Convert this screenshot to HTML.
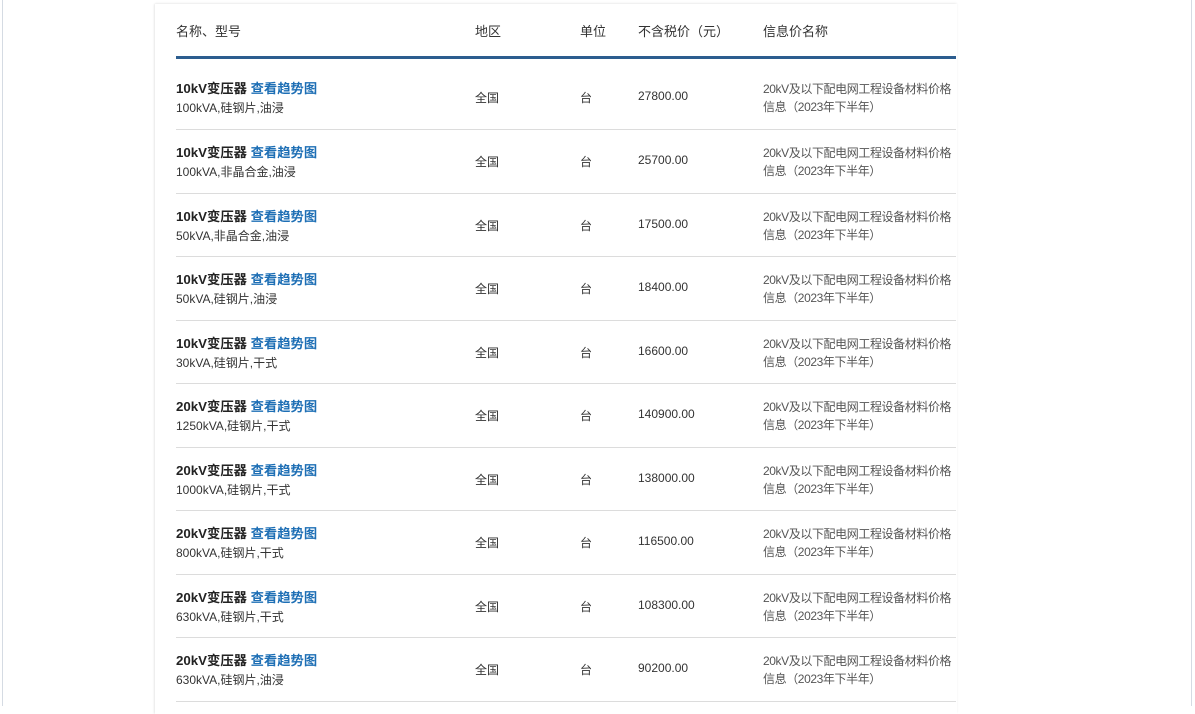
<!DOCTYPE html>
<html><head><meta charset="utf-8"><style>
*{margin:0;padding:0;box-sizing:border-box}
body{width:1195px;height:706px;overflow:hidden;background:#fff;font-family:"Liberation Sans","Noto Sans CJK SC",sans-serif;color:#333;position:relative}
.lb{position:absolute;left:2px;top:0;width:1px;height:706px;background:#d5dbe3}
.rb{position:absolute;left:1191px;top:0;width:1px;height:706px;background:#d5dbe3}
.panel{position:absolute;left:155px;top:4px;width:802px;height:710px;background:#fff;box-shadow:-1px 0 2px rgba(0,0,0,.08),0 -1px 2px rgba(0,0,0,.05)}
.h{position:absolute;top:21px;font-size:13px;color:#333}
.bar{position:absolute;left:176px;top:56px;width:780px;height:3px;background:#2c5d8f}
.row{position:absolute;left:176px;width:780px;height:63.5px;border-bottom:1px solid #dcdcdc}
.row div{position:absolute;font-size:12px;color:#333;white-space:nowrap}
.t{left:0;top:12px;font-size:13.3px!important;font-weight:bold;color:#222!important}
.t span{color:#1e6fb5}
.s{left:0;top:33px}
.c{top:23px}
.n{left:587px;top:14px;line-height:18px;color:#555!important;letter-spacing:-0.4px}
</style></head><body>
<div class="lb"></div><div class="rb"></div>
<div class="panel"></div>
<div class="h" style="left:176px">名称、型号</div>
<div class="h" style="left:475px">地区</div>
<div class="h" style="left:580px">单位</div>
<div class="h" style="left:638px">不含税价（元）</div>
<div class="h" style="left:763px">信息价名称</div>
<div class="bar"></div>
<div class="row" style="top:66px;height:64px"><div class="t">10kV变压器 <span>查看趋势图</span></div><div class="s">100kVA,硅钢片,油浸</div><div class="c" style="left:299px">全国</div><div class="c" style="left:404px">台</div><div class="c" style="left:462px">27800.00</div><div class="n">20kV及以下配电网工程设备材料价格<br>信息（2023年下半年）</div></div>
<div class="row" style="top:130px"><div class="t">10kV变压器 <span>查看趋势图</span></div><div class="s">100kVA,非晶合金,油浸</div><div class="c" style="left:299px">全国</div><div class="c" style="left:404px">台</div><div class="c" style="left:462px">25700.00</div><div class="n">20kV及以下配电网工程设备材料价格<br>信息（2023年下半年）</div></div>
<div class="row" style="top:193.5px"><div class="t">10kV变压器 <span>查看趋势图</span></div><div class="s">50kVA,非晶合金,油浸</div><div class="c" style="left:299px">全国</div><div class="c" style="left:404px">台</div><div class="c" style="left:462px">17500.00</div><div class="n">20kV及以下配电网工程设备材料价格<br>信息（2023年下半年）</div></div>
<div class="row" style="top:257px"><div class="t">10kV变压器 <span>查看趋势图</span></div><div class="s">50kVA,硅钢片,油浸</div><div class="c" style="left:299px">全国</div><div class="c" style="left:404px">台</div><div class="c" style="left:462px">18400.00</div><div class="n">20kV及以下配电网工程设备材料价格<br>信息（2023年下半年）</div></div>
<div class="row" style="top:320.5px"><div class="t">10kV变压器 <span>查看趋势图</span></div><div class="s">30kVA,硅钢片,干式</div><div class="c" style="left:299px">全国</div><div class="c" style="left:404px">台</div><div class="c" style="left:462px">16600.00</div><div class="n">20kV及以下配电网工程设备材料价格<br>信息（2023年下半年）</div></div>
<div class="row" style="top:384px"><div class="t">20kV变压器 <span>查看趋势图</span></div><div class="s">1250kVA,硅钢片,干式</div><div class="c" style="left:299px">全国</div><div class="c" style="left:404px">台</div><div class="c" style="left:462px">140900.00</div><div class="n">20kV及以下配电网工程设备材料价格<br>信息（2023年下半年）</div></div>
<div class="row" style="top:447.5px"><div class="t">20kV变压器 <span>查看趋势图</span></div><div class="s">1000kVA,硅钢片,干式</div><div class="c" style="left:299px">全国</div><div class="c" style="left:404px">台</div><div class="c" style="left:462px">138000.00</div><div class="n">20kV及以下配电网工程设备材料价格<br>信息（2023年下半年）</div></div>
<div class="row" style="top:511px"><div class="t">20kV变压器 <span>查看趋势图</span></div><div class="s">800kVA,硅钢片,干式</div><div class="c" style="left:299px">全国</div><div class="c" style="left:404px">台</div><div class="c" style="left:462px">116500.00</div><div class="n">20kV及以下配电网工程设备材料价格<br>信息（2023年下半年）</div></div>
<div class="row" style="top:574.5px"><div class="t">20kV变压器 <span>查看趋势图</span></div><div class="s">630kVA,硅钢片,干式</div><div class="c" style="left:299px">全国</div><div class="c" style="left:404px">台</div><div class="c" style="left:462px">108300.00</div><div class="n">20kV及以下配电网工程设备材料价格<br>信息（2023年下半年）</div></div>
<div class="row" style="top:638px"><div class="t">20kV变压器 <span>查看趋势图</span></div><div class="s">630kVA,硅钢片,油浸</div><div class="c" style="left:299px">全国</div><div class="c" style="left:404px">台</div><div class="c" style="left:462px">90200.00</div><div class="n">20kV及以下配电网工程设备材料价格<br>信息（2023年下半年）</div></div>
</body></html>
